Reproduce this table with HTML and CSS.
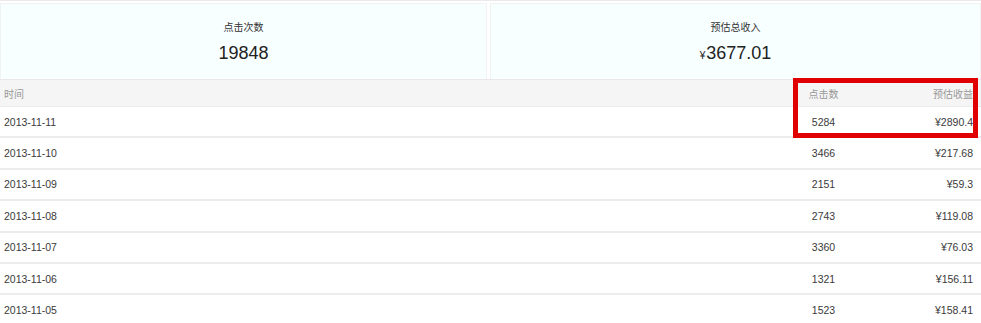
FILE: index.html
```html
<!DOCTYPE html>
<html lang="zh-CN">
<head>
<meta charset="utf-8">
<title>收入统计</title>
<link rel="stylesheet" href="styles.css">
</head>
<body>
<div class="page">
  <div class="summary">
    <div class="card">
      <div class="card-title">点击次数</div>
      <div class="card-value">19848</div>
    </div>
    <div class="card">
      <div class="card-title">预估总收入</div>
      <div class="card-value"><span class="yen">¥</span>3677.01</div>
    </div>
  </div>
  <div class="table">
    <div class="row head">
      <div class="c-date">时间</div>
      <div class="c-clicks">点击数</div>
      <div class="c-rev">预估收益</div>
    </div>
    <div class="row">
      <div class="c-date">2013-11-11</div>
      <div class="c-clicks">5284</div>
      <div class="c-rev">¥2890.4</div>
    </div>
    <div class="row">
      <div class="c-date">2013-11-10</div>
      <div class="c-clicks">3466</div>
      <div class="c-rev">¥217.68</div>
    </div>
    <div class="row">
      <div class="c-date">2013-11-09</div>
      <div class="c-clicks">2151</div>
      <div class="c-rev">¥59.3</div>
    </div>
    <div class="row">
      <div class="c-date">2013-11-08</div>
      <div class="c-clicks">2743</div>
      <div class="c-rev">¥119.08</div>
    </div>
    <div class="row">
      <div class="c-date">2013-11-07</div>
      <div class="c-clicks">3360</div>
      <div class="c-rev">¥76.03</div>
    </div>
    <div class="row">
      <div class="c-date">2013-11-06</div>
      <div class="c-clicks">1321</div>
      <div class="c-rev">¥156.11</div>
    </div>
    <div class="row">
      <div class="c-date">2013-11-05</div>
      <div class="c-clicks">1523</div>
      <div class="c-rev">¥158.41</div>
    </div>
    <div class="highlight"></div>
  </div>
</div>
</body>
</html>
```

FILE: styles.css
```css
* { box-sizing: border-box; }
html, body { margin: 0; padding: 0; background: #ffffff; overflow: hidden; }
body {
  font-family: "Liberation Sans", "Noto Sans CJK SC", sans-serif;
  color: #333;
  width: 981px;
  height: 323px;
}
.page { width: 981px; }
.summary {
  display: flex;
  gap: 3px;
  border-top: 1px solid #ede8ea;
  padding-top: 2px;
}
.card {
  flex: 1 1 0;
  height: 76px;
  background: #f8ffff;
  border: 1px solid #f1f3f3;
  border-bottom: none;
  display: flex;
  flex-direction: column;
  align-items: center;
  padding-top: 17px;
}
.card:first-child { flex: 0 0 487px; }
.card-title {
  font-size: 10px;
  line-height: 14px;
  color: #333;
}
.card-value {
  font-size: 18px;
  line-height: 22px;
  margin-top: 7px;
  color: #222;
}
.yen { font-size: 10px; margin-right: 1px; }
.table { position: relative; }
.row {
  display: grid;
  grid-template-columns: 1fr 60px 128px;
  align-items: center;
  height: 31.4px;
  border-bottom: 2px solid #ececec;
  font-size: 10.5px;
  color: #3a3a3a;
}
.row.head {
  height: 28px;
  background: #f5f5f5;
  border-top: 1px solid #ebe6e8;
  border-bottom: 1px solid #ebebeb;
  color: #999;
  font-size: 10px;
}
.c-date { padding-left: 4px; }
.c-clicks { text-align: center; padding-left: 1px; }
.c-rev { text-align: right; padding-right: 8px; }
.highlight {
  position: absolute;
  left: 793px;
  top: -1px;
  width: 185px;
  height: 60px;
  border: 5px solid #e00000;
  pointer-events: none;
}
```
